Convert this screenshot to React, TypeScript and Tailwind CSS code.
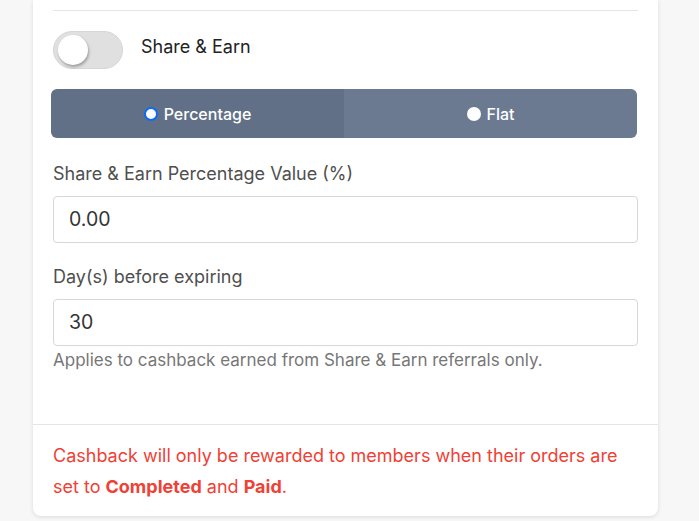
import React from "react";

export default function App() {
  return (
    <div className="min-h-[521px] w-[699px] bg-[#f7f7f7] overflow-hidden" style={{ fontFamily: "Inter, 'Noto Sans', sans-serif" }}>
      <div className="ml-[33px] w-[625px] bg-white rounded-b-lg shadow-[0_1px_4px_rgba(0,0,0,0.12)]">
        <div className="px-5 pt-[10px]">
          <div className="border-t border-[#e5e5e5]" />
          <div className="mt-5 flex items-center h-[38px]">
            <div className="relative w-[70px] h-[38px] rounded-full bg-[#e0e0e0] border border-[#d6d6d6]">
              <div className="absolute left-[4px] top-[3px] w-[30px] h-[30px] rounded-full bg-white shadow-[1px_2px_3px_rgba(0,0,0,0.3)]" />
            </div>
            <span className="ml-[18px] -mt-[7px] text-[18px] text-[#222]">Share &amp; Earn</span>
          </div>
          <div className="mt-5 -ml-0.5 mr-px flex h-[49px] rounded-md overflow-hidden text-white text-[16px] font-medium">
            <div className="flex-1 flex items-center justify-center bg-[#617086] gap-[6px]">
              <span className="box-border w-[14px] h-[14px] rounded-full bg-white border-2 border-[#0a6cf5]" />
              <span>Percentage</span>
            </div>
            <div className="flex-1 flex items-center justify-center bg-[#6b7a91] gap-[6px]">
              <span className="w-[14px] h-[14px] rounded-full bg-white" />
              <span>Flat</span>
            </div>
          </div>
          <div className="mt-[23px] h-[25px] leading-[25px] text-[18px] text-[#4f4f4f]">Share &amp; Earn Percentage Value (%)</div>
          <div className="mt-[10px] h-[47px] border border-[#d4d7dc] rounded flex items-center px-[15px] text-[19.5px] text-[#333]">0.00</div>
          <div className="mt-[21px] h-[25px] leading-[25px] text-[18px] text-[#4f4f4f]">Day(s) before expiring</div>
          <div className="mt-[10px] h-[47px] border border-[#d4d7dc] rounded flex items-center px-[15px] text-[19.5px] text-[#333]">30</div>
          <div className="mt-[2px] h-[25px] leading-[25px] text-[17px] text-[#777]">Applies to cashback earned from Share &amp; Earn referrals only.</div>
          <div className="h-[51px]" />
        </div>
        <div className="border-t border-[#e5e5e5] px-5 pt-[15px] pb-[14px] text-[18px] leading-[31px] text-[#ef4136]">
          <p>
            Cashback will only be rewarded to members when their orders are set to <span className="font-bold">Completed</span> and <span className="font-bold">Paid</span>.
          </p>
        </div>
      </div>
    </div>
  );
}
